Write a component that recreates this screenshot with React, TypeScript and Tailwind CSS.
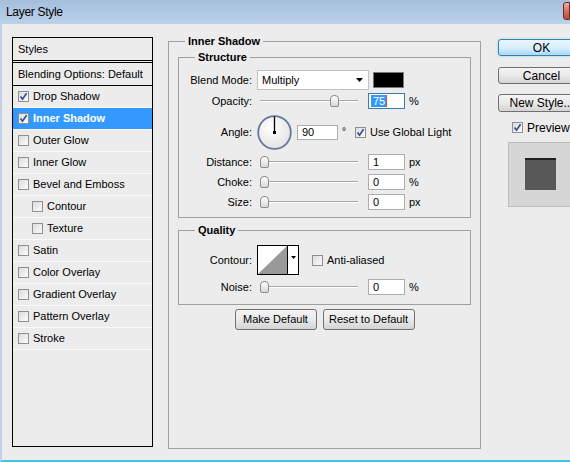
import React from 'react';

const FONT = "font-['Liberation_Sans',Arial,sans-serif]";

function Check({ on }: { on?: boolean }) {
  return (
    <div className="flex h-[11px] w-[11px] flex-shrink-0 items-center justify-center border border-[#8e8f8f] bg-gradient-to-br from-[#dcdcdc] to-[#fbfbfb]">
      {on && (
        <svg width="9" height="9" viewBox="0 0 9 9">
          <path d="M1.5 4.5 L3.5 7.2 L7.6 1.2" fill="none" stroke="#34489a" strokeWidth="1.6" />
        </svg>
      )}
    </div>
  );
}

function Arrow() {
  return (
    <svg width="7" height="4" viewBox="0 0 7 4">
      <path d="M0 0 H7 L3.5 4 Z" fill="#000" />
    </svg>
  );
}

function Slider({ left }: { left: number }) {
  return (
    <div className="relative h-[13px] w-[100px] flex-shrink-0">
      <div className="absolute left-[1px] right-[1px] top-[5px] h-[2px] border-t border-[#a8a8a8] bg-white" />
      <div
        className="absolute top-0 h-[12px] w-[9px] rounded-t-[4px] rounded-b-[2px] border border-[#8c8c8c] bg-gradient-to-b from-white to-[#d8d8d8]"
        style={{ left }}
      />
    </div>
  );
}

function Field({ value, w = 'w-[37px]', h = 'h-[16px]' }: { value: string; w?: string; h?: string }) {
  return (
    <div className={`${w} ${h} flex flex-shrink-0 items-center border border-[#abadb3] bg-white pl-[4px] text-[11px] leading-none`}>
      {value}
    </div>
  );
}

function Legend({ children }: { children: React.ReactNode }) {
  return <div className="-mt-[8px] ml-[16px] w-fit bg-[#ececec] px-[3px] text-[11px] font-bold leading-[15px]">{children}</div>;
}

function SliderRow({ label, thumb, value, unit }: { label: string; thumb: number; value: string; unit: string }) {
  return (
    <div className="flex h-[20px] items-center">
      <div className="w-[73px] text-right">{label}</div>
      <div className="ml-[7px]">
        <Slider left={thumb} />
      </div>
      <div className="ml-[9px]">
        <Field value={value} />
      </div>
      <div className="ml-[4px]">{unit}</div>
    </div>
  );
}

const styles = [
  { name: 'Drop Shadow', on: true },
  { name: 'Inner Shadow', on: true, active: true },
  { name: 'Outer Glow' },
  { name: 'Inner Glow' },
  { name: 'Bevel and Emboss' },
  { name: 'Contour', sub: true },
  { name: 'Texture', sub: true },
  { name: 'Satin' },
  { name: 'Color Overlay' },
  { name: 'Gradient Overlay' },
  { name: 'Pattern Overlay' },
  { name: 'Stroke' },
];

const winBtn =
  'flex items-center justify-center rounded-[3px] border border-[#707070] bg-gradient-to-b from-[#f4f4f4] via-[#e9e9e9] to-[#d4d4d4]';

export default function App() {
  return (
    <div className={`flex h-[462px] w-[570px] flex-col overflow-hidden bg-[#ececec] text-[11px] text-black ${FONT}`}>
      {/* Title bar */}
      <div className="flex h-[24px] flex-shrink-0 items-center justify-between bg-gradient-to-b from-[#a4bedc] to-[#bdd2ea] pl-[6px]">
        <span className="text-[12px] tracking-[-0.3px]">Layer Style</span>
        <div className="mb-[2px] h-[18px] w-[7px] rounded-l-[3px] border border-[#6b2a2a] bg-gradient-to-b from-[#e8b0a6] via-[#d27060] to-[#c24a3a]" />
      </div>

      <div className="flex flex-1 border-b-2 border-l-2 border-b-[#40c2e4] border-l-[#bfd2e8] pl-[10px] pt-[13px]">
        {/* Styles list */}
        <div className="flex h-[410px] w-[141px] flex-shrink-0 flex-col border border-black">
          <div className="flex h-[23px] items-center border-b border-black pl-[5px]">Styles</div>
          <div className="h-px" />
          <div className="flex h-[24px] items-center border-y border-black pl-[5px]">Blending Options: Default</div>
          {styles.map((s) => (
            <div
              key={s.name}
              className={`flex h-[22px] items-center gap-[4px] border-b border-[#fafafa] ${s.sub ? 'pl-[19px]' : 'pl-[5px]'} ${
                s.active ? 'bg-[#3399ff] font-bold text-white' : ''
              }`}
            >
              <Check on={s.on} />
              <span>{s.name}</span>
            </div>
          ))}
        </div>

        {/* Inner Shadow group */}
        <div className="ml-[15px] mt-[4px] flex h-[408px] w-[313px] flex-shrink-0 flex-col border border-[#a0a0a0]">
          <Legend>Inner Shadow</Legend>

          <div className="mx-[9px] mt-[8px] flex flex-col border border-[#a0a0a0] pb-[5px]">
            <Legend>Structure</Legend>

            <div className="mt-[5px] flex h-[20px] items-center">
              <div className="w-[73px] text-right">Blend Mode:</div>
              <div className="ml-[5px] flex h-[20px] w-[112px] items-center justify-between border border-[#c2c2c2] bg-white pl-[4px] pr-[5px]">
                <span>Multiply</span>
                <Arrow />
              </div>
              <div className="ml-[4px] h-[16px] w-[31px] border border-[#7a7a7a] bg-black" />
            </div>

            <div className="mt-[1px] flex h-[20px] items-center">
              <div className="w-[73px] text-right">Opacity:</div>
              <div className="ml-[7px]">
                <Slider left={71} />
              </div>
              <div className="ml-[9px] flex h-[16px] w-[37px] items-center border border-[#3d7bad] bg-white pl-[2px]">
                <span className="border-r border-[#d0541c] bg-[#3399ff] pl-[2px] pr-[1px] leading-[12px] text-white">75</span>
              </div>
              <div className="ml-[4px]">%</div>
            </div>

            <div className="mt-[3px] flex h-[36px] items-center">
              <div className="w-[73px] text-right">Angle:</div>
              <div className="ml-[5px]">
                <svg width="35" height="35" viewBox="0 0 35 35">
                  <defs>
                    <radialGradient id="dial" cx="40%" cy="35%" r="70%">
                      <stop offset="0%" stopColor="#ffffff" />
                      <stop offset="100%" stopColor="#e2e2e2" />
                    </radialGradient>
                  </defs>
                  <circle cx="17.5" cy="17.5" r="16.3" fill="url(#dial)" stroke="#66789c" strokeWidth="1.8" />
                  <line x1="17.5" y1="17.5" x2="17.5" y2="1.5" stroke="#000" strokeWidth="1.3" />
                  <rect x="16" y="16" width="3" height="3" fill="#000" />
                </svg>
              </div>
              <div className="ml-[5px]">
                <Field value="90" w="w-[41px]" h="h-[15px]" />
              </div>
              <div className="ml-[4px] self-start pt-[10px] text-[10px]">°</div>
              <div className="ml-[9px]">
                <Check on />
              </div>
              <div className="ml-[4px]">Use Global Light</div>
            </div>

            <div className="mt-[2px]">
              <SliderRow label="Distance:" thumb={1} value="1" unit="px" />
              <SliderRow label="Choke:" thumb={1} value="0" unit="%" />
              <SliderRow label="Size:" thumb={1} value="0" unit="px" />
            </div>
          </div>

          <div className="mx-[9px] mt-[12px] flex flex-col border border-[#a0a0a0] pb-[7px]">
            <Legend>Quality</Legend>

            <div className="mt-[7px] flex h-[30px] items-center">
              <div className="w-[73px] text-right">Contour:</div>
              <div className="ml-[5px] flex h-[30px] w-[42px] border border-black bg-white">
                <svg width="29" height="28" viewBox="0 0 29 28">
                  <path d="M0 28 L29 0 L29 28 Z" fill="#999" />
                </svg>
                <div className="flex flex-1 items-start justify-center border-l border-black pt-[10px]">
                  <svg width="5" height="3" viewBox="0 0 5 3">
                    <path d="M0 0 H5 L2.5 3 Z" fill="#000" />
                  </svg>
                </div>
              </div>
              <div className="ml-[13px]">
                <Check />
              </div>
              <div className="ml-[4px]">Anti-aliased</div>
            </div>

            <div className="mt-[2px]">
              <SliderRow label="Noise:" thumb={1} value="0" unit="%" />
            </div>
          </div>

          <div className="mt-[4px] flex justify-center gap-[6px]">
            <div className={`${winBtn} h-[21px] w-[82px]`}>Make Default</div>
            <div className={`${winBtn} h-[21px] w-[92px]`}>Reset to Default</div>
          </div>
        </div>

        {/* Right column */}
        <div className="ml-[17px] mt-[2px] flex flex-shrink-0 flex-col text-[12px]">
          <div className="flex h-[17px] w-[87px] items-center justify-center rounded-[3px] border border-[#3c7fb1] bg-gradient-to-b from-[#eaf6fd] via-[#d9f0fc] to-[#a7d9f5] shadow-[0_0_2px_#5fc8f0]">
            OK
          </div>
          <div className={`${winBtn} mt-[11px] h-[17px] w-[87px]`}>Cancel</div>
          <div className={`${winBtn} mt-[10px] h-[18px] w-[87px]`}>New Style...</div>
          <div className="mt-[10px] flex h-[11px] items-center gap-[4px] pl-[14px]">
            <Check on />
            <span>Preview</span>
          </div>
          <div className="ml-[10px] mt-[9px] h-[65px] w-[80px] border border-[#bdbdbd] bg-[#d6d6d6] pl-[16px] pt-[15px]">
            <div className="h-[32px] w-[31px] border-t-2 border-[#202020] bg-[#585858]" />
          </div>
        </div>
      </div>
    </div>
  );
}
